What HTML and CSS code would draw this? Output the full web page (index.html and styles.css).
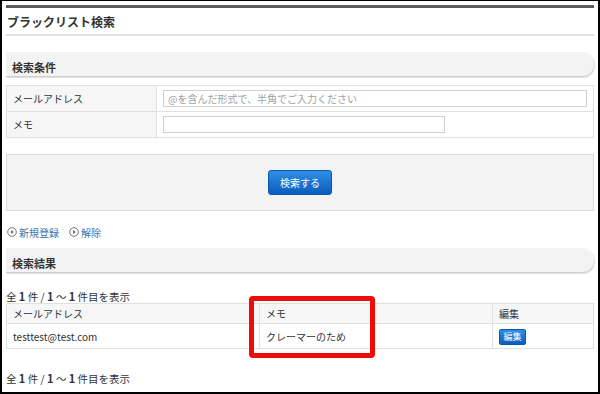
FILE: index.html
```html
<!DOCTYPE html>
<html lang="ja">
<head>
  <meta charset="UTF-8">
  <title>ブラックリスト検索</title>
  <link rel="stylesheet" href="styles.css">
</head>
<body>
  <div class="frame">
    <div class="page">
      <!-- Page title -->
      <h1 class="page-title">ブラックリスト検索</h1>

      <!-- Search conditions -->
      <h2 class="sec-head">検索条件</h2>
      <table class="form-table">
        <tr>
          <th>メールアドレス</th>
          <td><input type="text" class="field field-wide" placeholder="@を含んだ形式で、半角でご入力ください"></td>
        </tr>
        <tr>
          <th>メモ</th>
          <td><input type="text" class="field field-mid"></td>
        </tr>
      </table>
      <div class="search-box">
        <button type="button" class="btn">検索する</button>
      </div>

      <!-- Action links -->
      <div class="links">
        <a href="#" class="link">
          <svg class="ico" width="10" height="10" viewBox="0 0 10 10"><circle cx="5" cy="5" r="4.3" fill="none" stroke="#777" stroke-width="1"/><path d="M4 3 L7 5 L4 7 Z" fill="#777"/></svg>
          新規登録
        </a>
        <a href="#" class="link">
          <svg class="ico" width="10" height="10" viewBox="0 0 10 10"><circle cx="5" cy="5" r="4.3" fill="none" stroke="#777" stroke-width="1"/><path d="M4 3 L7 5 L4 7 Z" fill="#777"/></svg>
          解除
        </a>
      </div>

      <!-- Search results -->
      <h2 class="sec-head">検索結果</h2>
      <p class="count">全 <b>1</b> 件 / <b>1</b> ～ <b>1</b> 件目を表示</p>
      <div class="result-wrap">
        <table class="result-table">
          <tr>
            <th class="col-mail">メールアドレス</th>
            <th class="col-memo">メモ</th>
            <th>編集</th>
          </tr>
          <tr>
            <td>testtest@test.com</td>
            <td>クレーマーのため</td>
            <td><button type="button" class="btn btn-small">編集</button></td>
          </tr>
        </table>
        <div class="mark"></div>
      </div>
      <p class="count count-bottom">全 <b>1</b> 件 / <b>1</b> ～ <b>1</b> 件目を表示</p>
    </div>
  </div>
</body>
</html>
```

FILE: styles.css
```css
/* Base */
* { box-sizing: border-box; margin: 0; padding: 0; }
html, body {
  width: 600px;
  height: 394px;
  background: #fff;
  overflow: hidden;
}
body {
  font-family: "Noto Sans CJK JP", "Noto Sans", sans-serif;
  font-size: 10px;
  color: #333;
}

/* Black screenshot frame */
.frame {
  height: 394px;
  border: 2px solid #000;
  border-top-width: 1px;
  padding: 0 4px;
}
.page {
  margin-top: 4px;
  border-top: 3px solid #5c5c5c;
}

/* Title */
.page-title {
  font-size: 12px;
  font-weight: bold;
  line-height: 16px;
  padding: 6px 0 4px 1px;
  border-bottom: 2px solid #e2e2e2;
}

/* Section header bars */
.sec-head {
  height: 25px;
  margin-top: 16px;
  padding: 8px 0 0 6px;
  font-size: 11px;
  font-weight: bold;
  line-height: 14px;
  background: #f3f3f3;
  border-radius: 0 12px 12px 0;
  border-bottom: 1px solid #d0d0d0;
  box-shadow: 1px 1px 1px #ddd;
}

/* Condition form */
.form-table {
  width: 100%;
  margin-top: 8px;
  border-collapse: collapse;
}
.form-table th,
.form-table td {
  border: 1px solid #e0e0e0;
  height: 26px;
  padding: 0 6px;
  text-align: left;
  font-weight: normal;
  vertical-align: middle;
}
.form-table th {
  width: 151px;
  background: #f6f6f6;
}
.field {
  display: block;
  height: 17px;
  padding: 0 4px;
  border: 1px solid #cfcfcf;
  font-family: inherit;
  font-size: 10px;
  color: #333;
}
.field::placeholder { color: #a0a0a0; }
.field-wide { width: 424px; }
.field-mid { width: 282px; }

/* Search button area */
.search-box {
  display: flex;
  justify-content: center;
  align-items: center;
  height: 57px;
  margin-top: 16px;
  background: #f3f3f3;
  border: 1px solid #dcdcdc;
}
.btn {
  width: 64px;
  height: 25px;
  border: 1px solid #0b58ab;
  border-radius: 3px;
  background: linear-gradient(#2f8fe4, #0a5dbd);
  color: #fff;
  font-family: inherit;
  font-size: 10px;
  cursor: pointer;
}
.btn-small {
  width: 27px;
  height: 16px;
  border-radius: 2px;
  font-size: 9px;
  line-height: 12px;
}

/* Links */
.links {
  display: flex;
  gap: 9px;
  margin-top: 14px;
  height: 14px;
  align-items: center;
}
.link {
  display: flex;
  align-items: center;
  gap: 2px;
  color: #4171ad;
  text-decoration: none;
  font-size: 10px;
}
.ico { display: block; margin-left: 1px; }
.links + .sec-head { margin-top: 9px; }

/* Result count */
.count {
  margin-top: 17px;
  line-height: 12px;
  font-size: 10.5px;
}
.count b { font-size: 11px; }
.count-bottom { margin-top: 23px; }

/* Result table */
.result-wrap {
  position: relative;
}
.result-table {
  width: 100%;
  border-collapse: collapse;
}
.result-table th,
.result-table td {
  border: 1px solid #e0e0e0;
  padding: 0 6px;
  text-align: left;
  font-weight: normal;
  vertical-align: middle;
}
.result-table th {
  height: 20px;
  background: #f6f6f6;
}
.result-table td { height: 25px; }
.col-mail { width: 253px; }
.col-memo { width: 233px; }

/* Red annotation box */
.mark {
  position: absolute;
  left: 243px;
  top: -7px;
  width: 126px;
  height: 62px;
  border: 5px solid #ee0b0b;
  border-radius: 4px;
}
```
